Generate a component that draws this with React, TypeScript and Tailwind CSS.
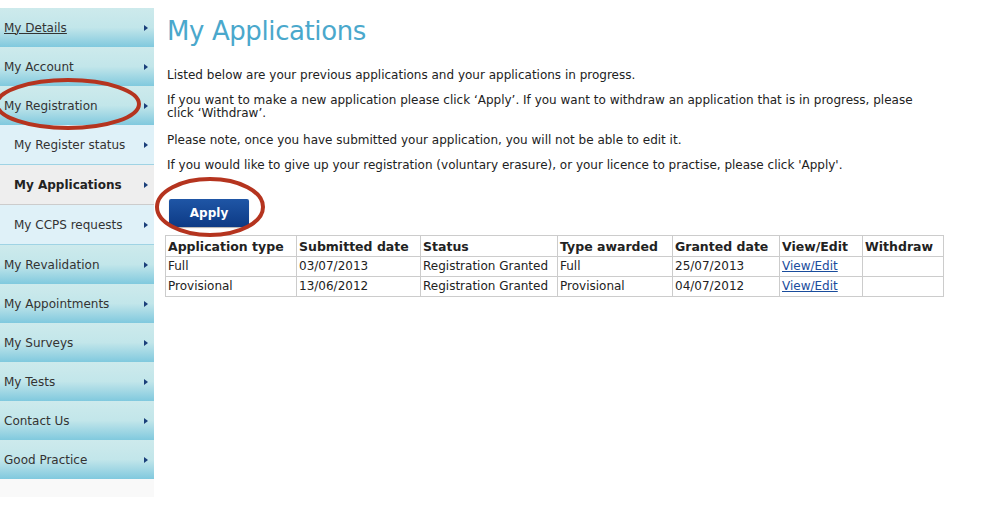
import React from "react";

const font = { fontFamily: '"DejaVu Sans", Verdana, sans-serif' };

function Arrow() {
  return (
    <svg width="4" height="6" viewBox="0 0 4 6" className="shrink-0">
      <path d="M0 0 L4 3 L0 6 Z" fill="#1a3f7a" />
    </svg>
  );
}

function MainItem({ label, underline }: { label: string; underline?: boolean }) {
  return (
    <div className="h-[39px] flex items-center justify-between pl-[4px] pr-[6px] bg-linear-to-b from-[#cdeaec] via-[#c2e6ea] to-[#80c9de] text-[12px] text-[#333]">
      <span className={underline ? "underline" : ""}>{label}</span>
      <Arrow />
    </div>
  );
}

function SubItem({ label, active }: { label: string; active?: boolean }) {
  return (
    <div
      className={
        "h-[40px] flex items-center justify-between pl-[14px] pr-[6px] text-[12px] border-b " +
        (active
          ? "bg-[#eeeeee] border-[#cccccc] font-bold text-[#222]"
          : "bg-[#dff1f8] border-[#9fd3e4] text-[#333]")
      }
    >
      <span>{label}</span>
      <Arrow />
    </div>
  );
}

const rows = [
  ["Full", "03/07/2013", "Registration Granted", "Full", "25/07/2013"],
  ["Provisional", "13/06/2012", "Registration Granted", "Provisional", "04/07/2012"],
];

const headers = [
  ["Application type", "w-[131px]"],
  ["Submitted date", "w-[124px]"],
  ["Status", "w-[137px]"],
  ["Type awarded", "w-[115px]"],
  ["Granted date", "w-[107px]"],
  ["View/Edit", "w-[83px]"],
  ["Withdraw", "w-[81px]"],
];

export default function App() {
  return (
    <div className="relative flex w-[983px] h-[514px] bg-white overflow-hidden" style={font}>
      <div className="w-[154px] pt-[8px] flex flex-col shrink-0">
        <MainItem label="My Details" underline />
        <MainItem label="My Account" />
        <MainItem label="My Registration" />
        <SubItem label="My Register status" />
        <SubItem label="My Applications" active />
        <SubItem label="My CCPS requests" />
        <MainItem label="My Revalidation" />
        <MainItem label="My Appointments" />
        <MainItem label="My Surveys" />
        <MainItem label="My Tests" />
        <MainItem label="Contact Us" />
        <MainItem label="Good Practice" />
        <div className="h-[18px] bg-[#f9f9f9]" />
      </div>

      <div className="flex-1 pl-[11px] pt-[15px] text-[12px] leading-[13px] text-[#222]">
        <h1 className="pl-[2px] text-[26px] leading-[32px] text-[#4aa8cc] tracking-[-0.4px] mb-[22px]">
          My Applications
        </h1>
        <div className="pl-[2px] w-[760px]">
          <p className="mb-[12px]">Listed below are your previous applications and your applications in progress.</p>
          <p className="mb-[14px]">
            If you want to make a new application please click ‘Apply’. If you want to withdraw an application that is in
            progress, please click ‘Withdraw’.
          </p>
          <p className="mb-[12px]">Please note, once you have submitted your application, you will not be able to edit it.</p>
          <p>
            If you would like to give up your registration (voluntary erasure), or your licence to practise, please click
            'Apply'.
          </p>
        </div>
        <button className="mt-[27px] ml-[4px] w-[80px] h-[28px] rounded-[2px] bg-linear-to-b from-[#1f56a6] to-[#0d3a85] text-white font-bold text-[12px] leading-[28px] shadow-[0_1px_1px_rgba(0,0,0,0.3)]">
          Apply
        </button>
        <table className="mt-[8px] border-collapse border border-[#cccccc] table-fixed w-[778px]">
          <thead>
            <tr className="h-[21px]">
              {headers.map(([h, w]) => (
                <th key={h} className={"border border-[#cccccc] text-left font-bold text-[12.5px] px-[2px] py-0 " + w}>
                  {h}
                </th>
              ))}
            </tr>
          </thead>
          <tbody>
            {rows.map((r, i) => (
              <tr key={i} className="h-[20px]">
                {r.map((c, j) => (
                  <td key={j} className="border border-[#cccccc] px-[2px] py-0 text-[12px]">
                    {c}
                  </td>
                ))}
                <td className="border border-[#cccccc] px-[2px] py-0">
                  <span className="underline text-[#1a4c9c]">View/Edit</span>
                </td>
                <td className="border border-[#cccccc]" />
              </tr>
            ))}
          </tbody>
        </table>
      </div>

      <svg className="absolute left-0 top-0 pointer-events-none" width="983" height="514">
        <ellipse cx="68" cy="104" rx="71" ry="24" fill="none" stroke="#b5341f" strokeWidth="4" />
        <ellipse cx="210" cy="207" rx="53" ry="28" fill="none" stroke="#b5341f" strokeWidth="4" />
      </svg>
    </div>
  );
}
